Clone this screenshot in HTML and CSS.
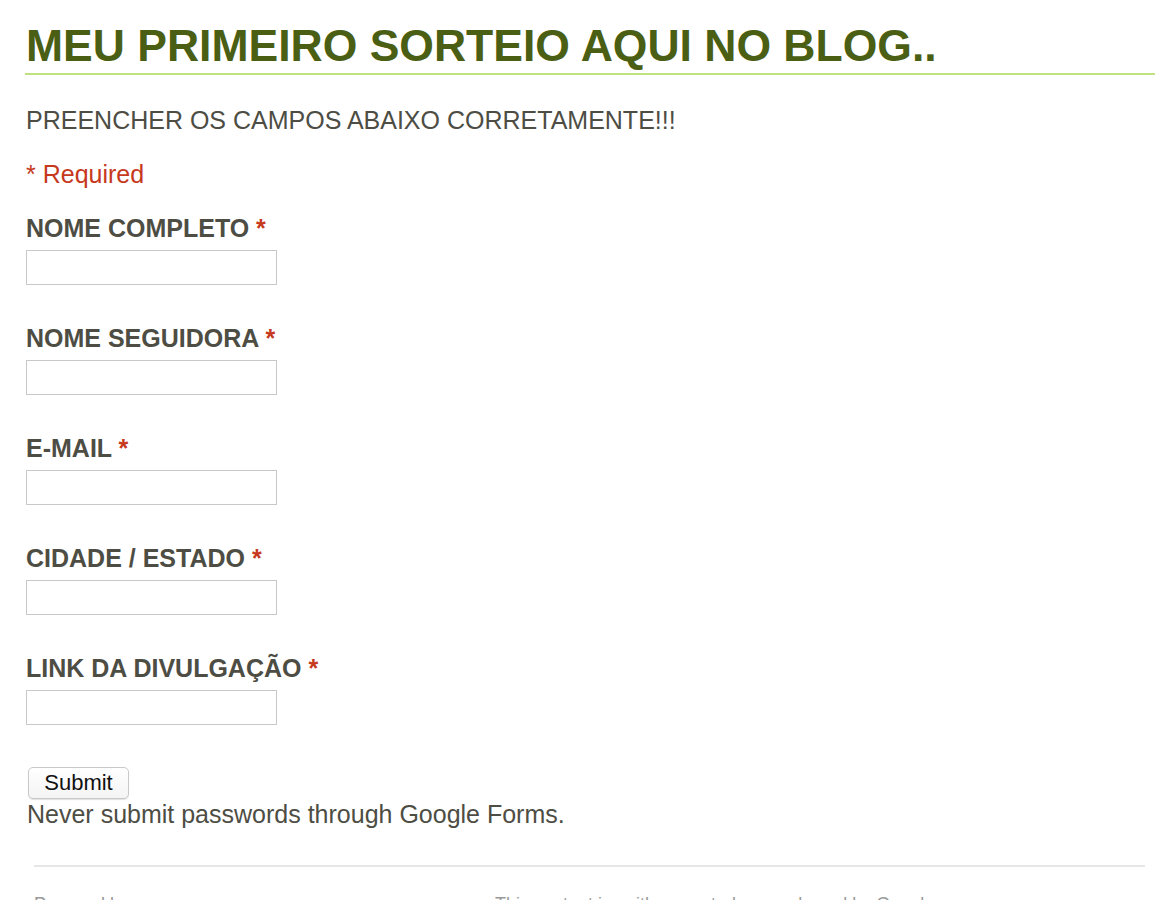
FILE: index.html
```html
<!DOCTYPE html>
<html lang="pt">
  <head>
    <meta charset="UTF-8" />
    <meta name="viewport" content="width=device-width, initial-scale=1.0" />
    <title>MEU PRIMEIRO SORTEIO AQUI NO BLOG..</title>
    <link rel="stylesheet" href="styles.css">
  </head>
  <body>
    <div class="page">
      <div class="header">
        <h1 class="title">MEU PRIMEIRO SORTEIO AQUI NO BLOG..</h1>
        <div class="desc">PREENCHER OS CAMPOS ABAIXO CORRETAMENTE!!!</div>
        <div class="required-note">* Required</div>
      </div>
      <form class="form">
        <div class="item">
          <label class="label">NOME COMPLETO <span class="star">*</span></label>
          <input class="field" type="text" />
        </div>
        <div class="item">
          <label class="label">NOME SEGUIDORA <span class="star">*</span></label>
          <input class="field" type="text" />
        </div>
        <div class="item">
          <label class="label">E-MAIL <span class="star">*</span></label>
          <input class="field" type="text" />
        </div>
        <div class="item">
          <label class="label">CIDADE / ESTADO <span class="star">*</span></label>
          <input class="field" type="text" />
        </div>
        <div class="item">
          <label class="label">LINK DA DIVULGAÇÃO <span class="star">*</span></label>
          <input class="field" type="text" />
        </div>
        <div class="submit-row">
          <button type="button" class="submit">Submit</button>
          <div class="warning">Never submit passwords through Google Forms.</div>
        </div>
      </form>
      <div class="footer">
        <div class="powered">Powered by</div>
        <div class="terms">This content is neither created nor endorsed by Google.</div>
      </div>
    </div>
  </body>
</html>
```

FILE: styles.css
```css
body {
  margin: 0;
  padding: 0;
  background: white;
  font-family: "Liberation Sans", Arial, sans-serif;
  color: #4d4d44;
  overflow: hidden;
}
.page {
  padding: 21px 17px 0 25px;
}
.title {
  margin: 0;
  padding: 0 0 2px 1px;
  font-size: 44.5px;
  line-height: 50px;
  font-weight: 700;
  color: #4a5e14;
  border-bottom: 2px solid #c0e17f;
}
.desc {
  margin-top: 30px;
  font-size: 25px;
  line-height: 30px;
  padding-left: 1px;
}
.required-note {
  margin-top: 24px;
  font-size: 25px;
  line-height: 30px;
  color: #c6391d;
  padding-left: 1px;
}
.form {
  margin: 24px 0 0 1px;
  display: flex;
  flex-direction: column;
  gap: 38px;
}
.item {
  display: flex;
  flex-direction: column;
  align-items: flex-start;
  gap: 7px;
}
.label {
  font-size: 25px;
  line-height: 30px;
  font-weight: 700;
  color: #4d4d44;
}
.star {
  color: #c6391d;
}
.field {
  box-sizing: border-box;
  width: 251px;
  height: 35px;
  margin: 0;
  border: 1px solid #c8c8c8;
  border-radius: 0;
  background: white;
  font-size: 20px;
}
.submit-row {
  margin-top: 4px;
  display: flex;
  flex-direction: column;
  align-items: flex-start;
  gap: 0;
}
.submit {
  margin-left: 2px;
  width: 101px;
  height: 32px;
  padding: 0;
  font-family: "Liberation Sans", Arial, sans-serif;
  font-size: 22px;
  color: #111;
  background: linear-gradient(#ffffff, #f4f4f4);
  border: 1px solid #c9c9c9;
  border-radius: 5px;
  box-shadow: 0 1px 1px rgba(0, 0, 0, 0.12);
}
.warning {
  font-size: 25px;
  line-height: 30px;
  padding-left: 1px;
}
.footer {
  margin: 36px 10px 0 9px;
  border-top: 2px solid #e6e6e6;
  padding-top: 26px;
  display: flex;
  font-size: 18px;
  line-height: 22px;
  color: #999;
}
.powered {
  width: 461px;
}
```
